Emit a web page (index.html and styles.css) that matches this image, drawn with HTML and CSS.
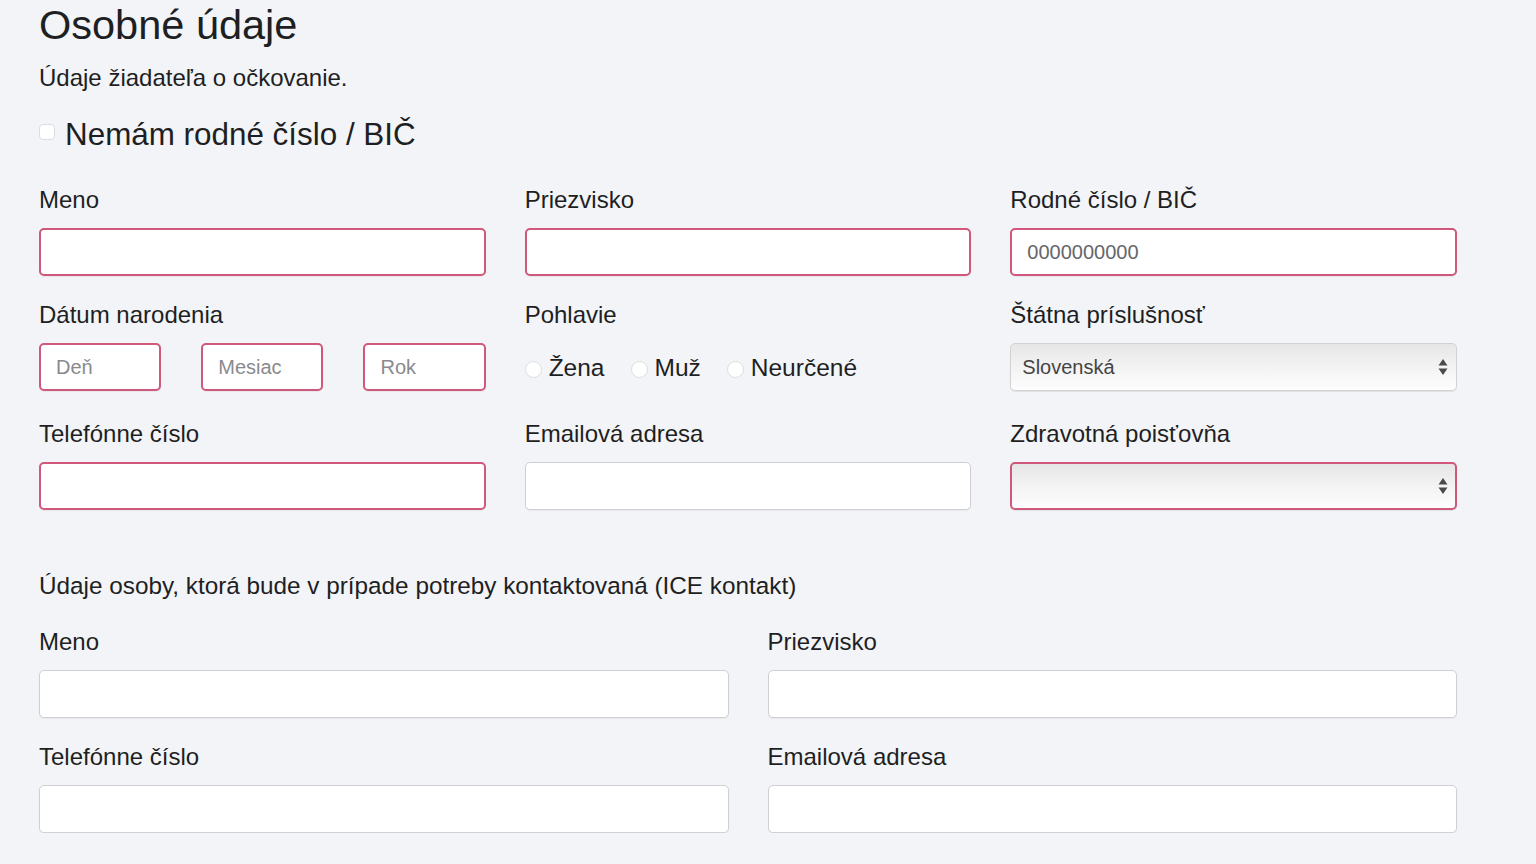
FILE: index.html
```html
<!DOCTYPE html>
<html lang="sk">
<head>
<meta charset="utf-8">
<title>Osobné údaje</title>
<link rel="stylesheet" href="styles.css">
</head>
<body>
<main class="page">
  <h1 class="title">Osobné údaje</h1>
  <p class="subtitle">Údaje žiadateľa o očkovanie.</p>
  <label class="check-row"><input type="checkbox" class="check"><span>Nemám rodné číslo / BIČ</span></label>

  <div class="grid3">
    <div class="field">
      <label class="label">Meno</label>
      <input class="input invalid" type="text">
    </div>
    <div class="field">
      <label class="label">Priezvisko</label>
      <input class="input invalid" type="text">
    </div>
    <div class="field">
      <label class="label">Rodné číslo / BIČ</label>
      <input class="input invalid dark-ph" type="text" placeholder="0000000000">
    </div>

    <div class="field">
      <label class="label">Dátum narodenia</label>
      <div class="date">
        <input class="input invalid" type="text" placeholder="Deň">
        <input class="input invalid" type="text" placeholder="Mesiac">
        <input class="input invalid" type="text" placeholder="Rok">
      </div>
    </div>
    <div class="field">
      <label class="label">Pohlavie</label>
      <div class="radios">
        <label class="radio"><input type="radio" name="g"><span>Žena</span></label>
        <label class="radio"><input type="radio" name="g"><span>Muž</span></label>
        <label class="radio"><input type="radio" name="g"><span>Neurčené</span></label>
      </div>
    </div>
    <div class="field">
      <label class="label">Štátna príslušnosť</label>
      <div class="select-wrap">
        <select class="select"><option>Slovenská</option></select>
        <svg class="arrows" width="10" height="18" viewBox="0 0 10 18"><path d="M5 1 L9.5 7.5 H0.5 Z M5 17 L9.5 10.5 H0.5 Z" fill="#4a4a4a"/></svg>
      </div>
    </div>

    <div class="field row3">
      <label class="label">Telefónne číslo</label>
      <input class="input invalid" type="text">
    </div>
    <div class="field row3">
      <label class="label">Emailová adresa</label>
      <input class="input" type="text">
    </div>
    <div class="field row3">
      <label class="label">Zdravotná poisťovňa</label>
      <div class="select-wrap">
        <select class="select invalid-select"><option></option></select>
        <svg class="arrows" width="10" height="18" viewBox="0 0 10 18"><path d="M5 1 L9.5 7.5 H0.5 Z M5 17 L9.5 10.5 H0.5 Z" fill="#4a4a4a"/></svg>
      </div>
    </div>
  </div>

  <p class="section">Údaje osoby, ktorá bude v prípade potreby kontaktovaná (ICE kontakt)</p>

  <div class="grid2">
    <div class="field">
      <label class="label">Meno</label>
      <input class="input" type="text">
    </div>
    <div class="field">
      <label class="label">Priezvisko</label>
      <input class="input" type="text">
    </div>
    <div class="field">
      <label class="label">Telefónne číslo</label>
      <input class="input" type="text">
    </div>
    <div class="field">
      <label class="label">Emailová adresa</label>
      <input class="input" type="text">
    </div>
  </div>
</main>
</body>
</html>
```

FILE: styles.css
```css
* { box-sizing: border-box; }

html, body {
  margin: 0;
  background: #f3f4f7;
}

body {
  font-family: "Liberation Sans", Arial, sans-serif;
  color: #1e1f23;
}

.page {
  width: 1418px;
  margin-left: 39px;
}

.title {
  margin: 0;
  font-size: 41.5px;
  font-weight: 400;
  line-height: 50px;
}

.subtitle {
  margin: 13px 0 0;
  font-size: 24px;
  line-height: 30px;
}

.check-row {
  display: flex;
  align-items: center;
  margin-top: 22px;
  height: 40px;
  font-size: 31.4px;
  line-height: 40px;
}

.check {
  appearance: none;
  -webkit-appearance: none;
  width: 16px;
  height: 16px;
  margin: 0 10px 0 0;
  background: #fff;
  border: 1px solid #dcdde0;
  border-radius: 4px;
  transform: translateY(-3px);
}

.grid3 {
  display: grid;
  grid-template-columns: repeat(3, 1fr);
  column-gap: 39px;
  row-gap: 24px;
  margin-top: 30px;
}

.row3 { margin-top: 4px; }

.grid2 {
  display: grid;
  grid-template-columns: repeat(2, 1fr);
  column-gap: 39px;
  row-gap: 24px;
  margin-top: 26px;
}

.field {
  display: flex;
  flex-direction: column;
}

.label {
  font-size: 24px;
  line-height: 30px;
  margin-bottom: 13px;
}

.input {
  width: 100%;
  height: 48px;
  padding: 0 15px;
  font-family: "Liberation Sans", Arial, sans-serif;
  font-size: 20px;
  color: #333;
  background: #fff;
  border: 1px solid #cfd0d4;
  border-radius: 5px;
  box-shadow: 0 1px 1px rgba(0,0,0,0.05);
  outline: none;
}

.input.invalid {
  border: 2px solid #d0587a;
}

.input::placeholder {
  color: #8a8a8e;
}

.input.dark-ph::placeholder {
  color: #66666a;
}

.date {
  display: grid;
  grid-template-columns: repeat(3, 1fr);
  column-gap: 40px;
}

.radios {
  display: flex;
  align-items: center;
  height: 48px;
  padding-top: 2px;
}

.radio {
  display: flex;
  align-items: center;
  font-size: 24.5px;
  line-height: 30px;
  margin-right: 26px;
}

.radio input {
  appearance: none;
  -webkit-appearance: none;
  width: 17px;
  height: 17px;
  margin: 2px 7px 0 0;
  background: #fff;
  border: 1px solid #dcdde0;
  border-radius: 50%;
}

.select-wrap {
  position: relative;
  height: 48px;
}

.select {
  appearance: none;
  -webkit-appearance: none;
  width: 100%;
  height: 48px;
  padding: 0 40px 0 11px;
  font-family: "Liberation Sans", Arial, sans-serif;
  font-size: 20px;
  color: #444;
  background: linear-gradient(#e6e6e7, #f4f4f5 55%, #fdfdfd);
  border: 1px solid #d2d2d5;
  border-radius: 5px;
  box-shadow: 0 1px 1px rgba(0,0,0,0.08);
  outline: none;
}

.select.invalid-select {
  border: 2px solid #d0587a;
}

.arrows {
  position: absolute;
  right: 9px;
  top: 15px;
  pointer-events: none;
}

.section {
  margin: 61px 0 0;
  font-size: 24.3px;
  line-height: 30px;
}
```
